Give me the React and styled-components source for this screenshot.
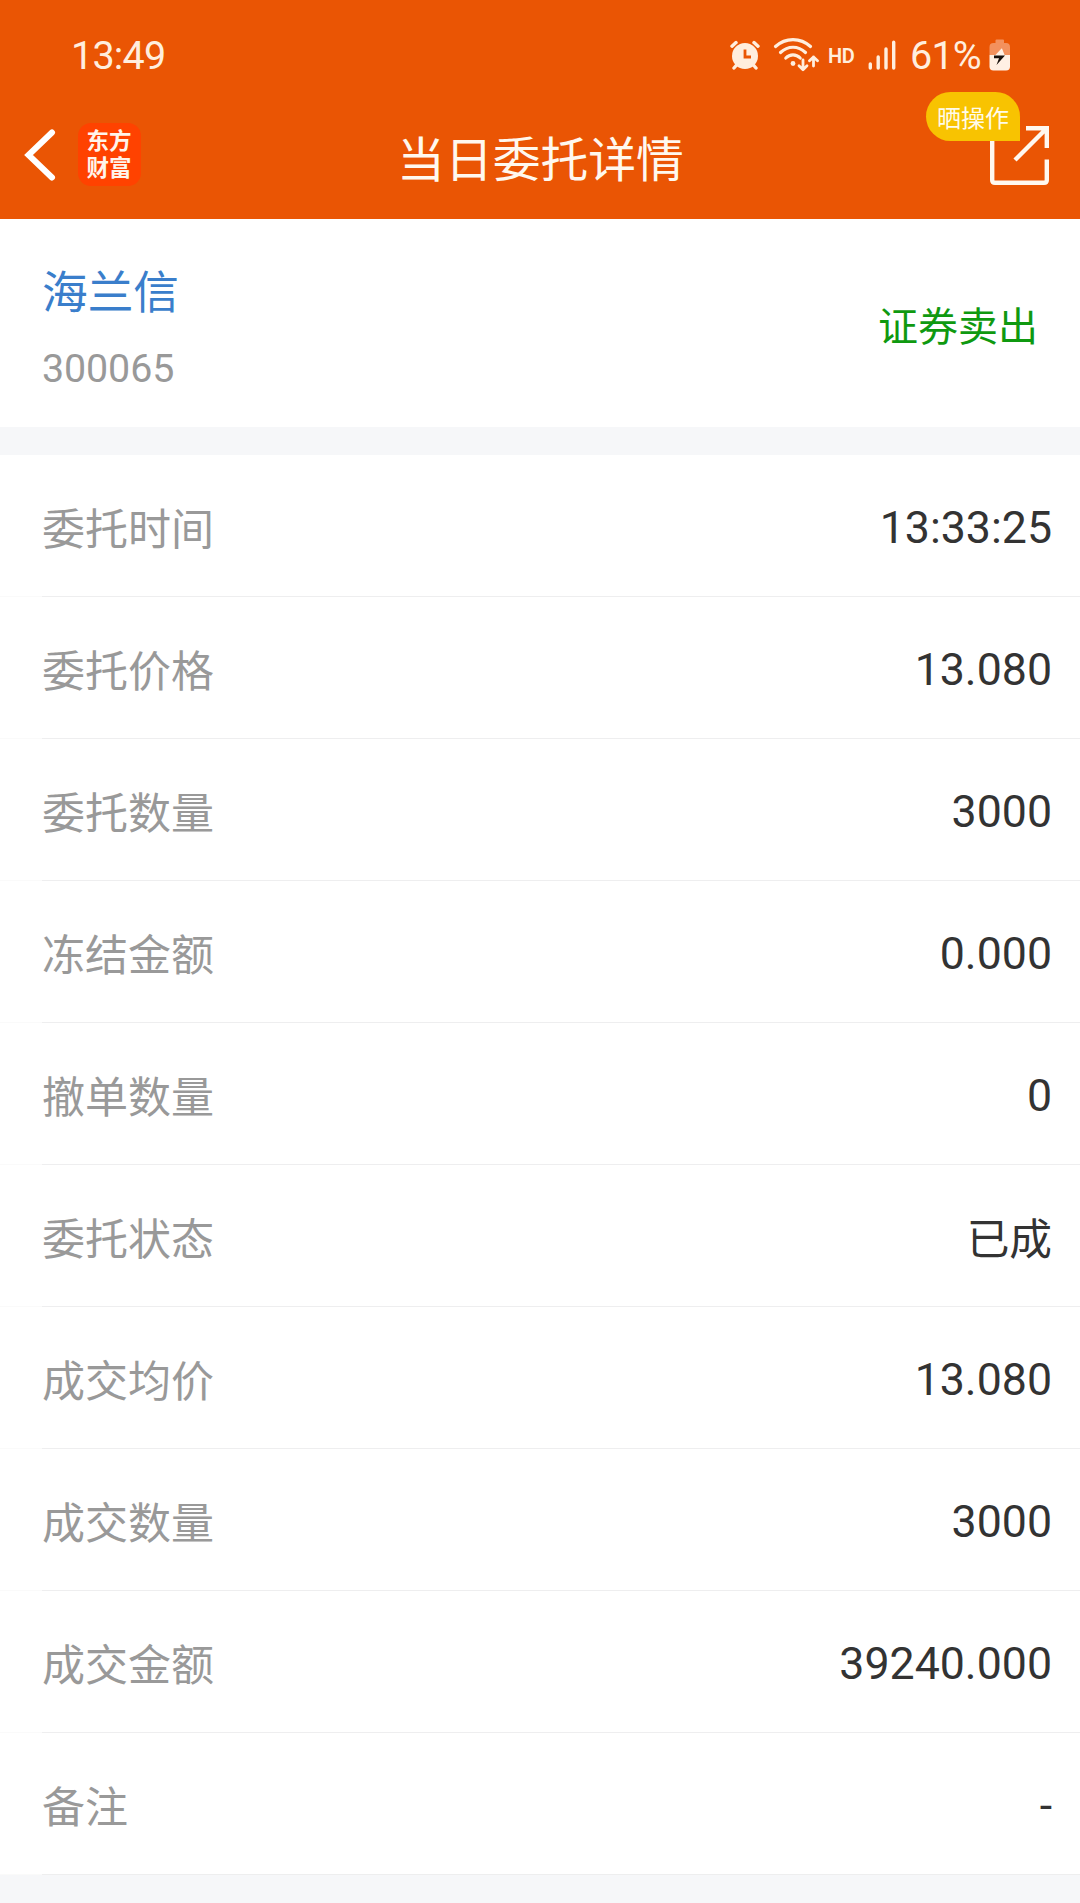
import React from "react";
import styled, { createGlobalStyle } from "styled-components";

const GlobalStyle = createGlobalStyle`
  * { box-sizing: border-box; }
  body {
    margin: 0;
    background: #f6f7f9;
    font-family: Roboto, "Noto Sans CJK SC", sans-serif;
  }
`;

const Screen = styled.main`
  width: 1080px;
  height: 1903px;
  display: flex;
  flex-direction: column;
  overflow: hidden;
  background: #f6f7f9;
`;

const Header = styled.header`
  height: 219px;
  flex: none;
  background: #ea5504;
  color: #fff8ee;
`;

const StatusBar = styled.div`
  height: 110px;
  padding: 0 69px 0 71px;
  display: flex;
  align-items: center;
  justify-content: space-between;
  color: #ffeede;
`;

const StatusText = styled.span`
  font-size: 39.5px;
  line-height: 50px;
  padding-top: 2px;
  letter-spacing: ${(p) => p.$spacing || "0"};
`;

const StatusIcons = styled.div`
  display: flex;
  align-items: center;
`;

const StatusIcon = styled.svg`
  display: block;
  flex: none;
  margin-right: ${(p) => p.$gap || 0}px;
`;

const HdLabel = styled.span`
  width: 40px;
  font-size: 20px;
  font-weight: 600;
  line-height: 24px;
  letter-spacing: -0.4px;
  padding-top: 1px;
`;

const ChargeLevel = styled.div`
  display: flex;
  justify-content: space-between;
  align-items: center;
  width: 101px;
`;

const NavBar = styled.div`
  height: 109px;
  display: grid;
  grid-template-columns: 300px 1fr 300px;
`;

const NavLeft = styled.div`
  display: flex;
  align-items: flex-start;
  padding: 13px 0 0 24px;
`;

const BackIcon = styled.svg`
  display: block;
  margin: 5px 22px 0 0;
`;

const Logo = styled.div`
  width: 63px;
  height: 63px;
  border-radius: 13px;
  background: #ff4200;
  color: #fff4ea;
  text-align: center;
  padding: 3px 1px 0 0;
  font-family: "Noto Sans CJK SC", sans-serif;
  font-size: 22.5px;
  font-weight: 700;
  line-height: 27px;
`;

const Title = styled.h1`
  margin: 0;
  padding: 21px 0 0 1px;
  text-align: center;
  white-space: nowrap;
  font-family: "Noto Sans CJK SC", sans-serif;
  font-size: 47.8px;
  font-weight: 400;
  line-height: 52px;
`;

const NavRight = styled.div`
  position: relative;
  display: flex;
  justify-content: flex-end;
  align-items: flex-start;
  padding: 16px 31px 0 0;
`;

const ShareBadge = styled.span`
  position: absolute;
  right: 60px;
  top: -18px;
  width: 94px;
  height: 49px;
  border-radius: 25px 25px 0 25px;
  background: #f8c301;
  color: #fffbea;
  text-align: center;
  font-family: "Noto Sans CJK SC", sans-serif;
  font-size: 24px;
  line-height: 50px;
`;

const Summary = styled.section`
  height: 208px;
  flex: none;
  display: flex;
  justify-content: space-between;
  padding: 0 42px;
  background: #fff;
`;

const Stock = styled.div`
  display: flex;
  flex-direction: column;
  padding-top: 38px;
`;

const StockName = styled.span`
  font-family: "Noto Sans CJK SC", sans-serif;
  color: #3a7ecb;
  font-size: 45.7px;
  line-height: 64px;
`;

const StockCode = styled.span`
  color: #999;
  font-size: 39.4px;
  line-height: 48px;
  letter-spacing: -0.1px;
  margin-top: 24px;
`;

const Direction = styled.span`
  padding-top: 76px;
  font-family: "Noto Sans CJK SC", sans-serif;
  color: #0f9910;
  font-size: 40px;
  line-height: 58px;
`;

const Details = styled.dl`
  margin: 28px 0 0;
  background: #fff;
`;

const Row = styled.div`
  height: 142px;
  display: flex;
  justify-content: space-between;
  padding: 0 28px 0 42px;
  background: linear-gradient(90deg, #fafafa 42px, #eeeeef 42px) bottom / 100% 1px no-repeat;
`;

const Label = styled.dt`
  padding-top: 40px;
  font-family: "Noto Sans CJK SC", sans-serif;
  color: #999;
  font-size: 43px;
  line-height: 62px;
`;

const Value = styled.dd`
  margin: 0;
  padding-top: ${(p) => (p.$cjk ? 44 : 42)}px;
  color: #333;
  font-size: ${(p) => (p.$cjk ? 42.7 : 44.7)}px;
  line-height: 62px;
`;

const rows = [
  ["委托时间", "13:33:25"],
  ["委托价格", "13.080"],
  ["委托数量", "3000"],
  ["冻结金额", "0.000"],
  ["撤单数量", "0"],
  ["委托状态", "已成", true],
  ["成交均价", "13.080"],
  ["成交数量", "3000"],
  ["成交金额", "39240.000"],
  ["备注", "-"],
];

function AlarmIcon() {
  return (
    <StatusIcon width="30" height="32" viewBox="0 0 30 32" $gap={13}>
      <g stroke="currentColor" strokeWidth="3.4" strokeLinecap="round" fill="none">
        <path d="M2 7.2 6 3.6M28 7.2 24 3.6M7 25.5 4 29M23 25.5 26 29" />
      </g>
      <circle cx="15" cy="17" r="13" fill="currentColor" />
      <path d="M15 10.5V18H21" fill="none" stroke="#ea5504" strokeWidth="2.8" />
    </StatusIcon>
  );
}

function WifiIcon() {
  return (
    <StatusIcon width="46" height="36" viewBox="0 0 46 36" $gap={9}>
      <g fill="none" stroke="currentColor" strokeWidth="3.2" strokeLinecap="round">
        <path d="M2.5 9.5C12.5 0.2 27.5 0.2 37.5 9.5" />
        <path d="M7.5 15.5C15 8.5 25 8.5 32.5 15.5" />
        <path d="M12.8 21C17 16.7 23 16.7 27.2 21" />
      </g>
      <circle cx="20" cy="26.5" r="2.4" fill="currentColor" />
      <g fill="none" stroke="currentColor" strokeWidth="2.8" strokeLinecap="round" strokeLinejoin="round">
        <path d="M30 23V32.5M26 28.8 30 32.7 34 28.8" />
        <path d="M40.5 29V20M36.5 23.8 40.5 19.9 44.5 23.8" />
      </g>
    </StatusIcon>
  );
}

function SignalIcon() {
  return (
    <StatusIcon width="28" height="30" viewBox="0 0 28 30" $gap={14}>
      <g stroke="currentColor" strokeWidth="3.4" strokeLinecap="round">
        <path d="M2.3 24V28M10.2 17V28M18 9V28M25.7 2.3V28" />
      </g>
    </StatusIcon>
  );
}

function BatteryIcon() {
  return (
    <StatusIcon width="22" height="32" viewBox="0 0 22 32">
      <path d="M6.5 4V1.5Q6.5 0.5 7.5 0.5H14Q15 0.5 15 1.5V4H17Q21 4 21 8V16H0.5V8Q0.5 4 4.5 4Z" fill="#f3915d" />
      <path d="M0.5 16H21V27.5Q21 31.5 17 31.5H4.5Q0.5 31.5 0.5 27.5Z" fill="#fff0e4" />
      <path d="M12.5 9.5 5.5 17H16L13 9.5Z" fill="#fff0e4" />
      <path d="M5 16.5H16L7.5 26 10 19.2H5Z" fill="#18100c" />
    </StatusIcon>
  );
}

function ShareIcon() {
  return (
    <svg width="59" height="59" viewBox="0 0 59 59" fill="none" stroke="#fff8f0" strokeWidth="4.4">
      <path d="M2.2 10V54Q2.2 56.8 5 56.8H54Q56.8 56.8 56.8 54V33.5" />
      <path d="M36 2.2H56.8V22M56 3 25 34" />
    </svg>
  );
}

export default function App() {
  return (
    <>
      <GlobalStyle />
      <Screen>
        <Header>
          <StatusBar>
            <StatusText $spacing="-0.8px">13:49</StatusText>
            <StatusIcons>
              <AlarmIcon />
              <WifiIcon />
              <HdLabel>HD</HdLabel>
              <SignalIcon />
              <ChargeLevel>
                <StatusText $spacing="-0.8px">61%</StatusText>
                <BatteryIcon />
              </ChargeLevel>
            </StatusIcons>
          </StatusBar>
          <NavBar>
            <NavLeft>
              <BackIcon width="32" height="54" viewBox="0 0 32 54" fill="none" stroke="#fff" strokeWidth="6" strokeLinecap="round">
                <path d="M28 4.5 4.500 27 28 49.5" />
              </BackIcon>
              <Logo>
                东方
                <br />
                财富
              </Logo>
            </NavLeft>
            <Title>当日委托详情</Title>
            <NavRight>
              <ShareIcon />
              <ShareBadge>晒操作</ShareBadge>
            </NavRight>
          </NavBar>
        </Header>
        <Summary>
          <Stock>
            <StockName>海兰信</StockName>
            <StockCode>300065</StockCode>
          </Stock>
          <Direction>证券卖出</Direction>
        </Summary>
        <Details>
          {rows.map(([label, value, cjk]) => (
            <Row key={label}>
              <Label>{label}</Label>
              <Value $cjk={cjk}>{value}</Value>
            </Row>
          ))}
        </Details>
      </Screen>
    </>
  );
}
